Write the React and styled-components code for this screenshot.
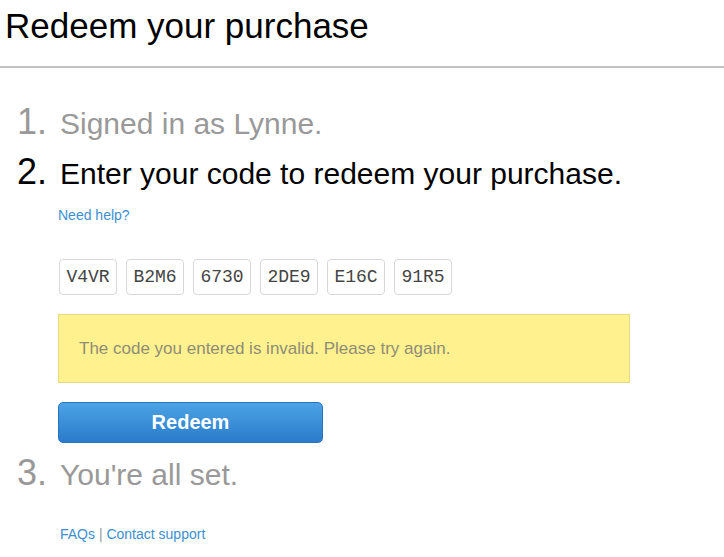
import React from "react";
import styled, { createGlobalStyle } from "styled-components";

const Global = createGlobalStyle`
  html, body { margin: 0; padding: 0; background: #fff; }
  body { font-family: "Liberation Sans", Arial, sans-serif; }
`;

const Header = styled.header`
  height: 68px;
  box-sizing: border-box;
  padding: 6px 0 0 5px;
  border-bottom: 2px solid #c2c2c2;
`;

const Title = styled.h1`
  margin: 0;
  font-size: 35px;
  font-weight: normal;
  line-height: 40px;
  color: #000;
`;

const Main = styled.main`
  padding: 30px 0 0 17px;
`;

const Step = styled.div`
  display: flex;
  align-items: baseline;
  line-height: 48px;
  color: ${(p) => (p.$active ? "#000" : "#999")};
`;

const Num = styled.span`
  width: 43px;
  font-size: 36px;
  flex: none;
`;

const StepText = styled.span`
  font-size: 30px;
`;

const Body = styled.div`
  padding-left: 41px;
  display: flex;
  flex-direction: column;
  align-items: flex-start;
`;

const Link = styled.a`
  color: #3d8fd1;
  text-decoration: none;
  font-size: 14px;
  line-height: 20px;
`;

const Help = styled(Link)`
  margin-top: 7px;
`;

const Codes = styled.div`
  display: flex;
  gap: 9px;
  margin: 34px 0 0 1px;
`;

const CodeBox = styled.div`
  width: 58px;
  height: 36px;
  box-sizing: border-box;
  border: 1px solid #d8d8d8;
  border-radius: 4px;
  display: flex;
  align-items: center;
  justify-content: center;
  font-family: "Liberation Mono", "Courier New", monospace;
  font-size: 18px;
  color: #444;
`;

const Alert = styled.div`
  margin-top: 19px;
  width: 572px;
  height: 69px;
  box-sizing: border-box;
  background: #fff28e;
  border: 1px solid #e3d985;
  display: flex;
  align-items: center;
  padding-left: 20px;
  font-size: 17px;
  color: #8f8c78;
`;

const Button = styled.button`
  margin-top: 19px;
  width: 265px;
  height: 41px;
  border: 1px solid #2b74bd;
  border-radius: 5px;
  background: linear-gradient(#4ca3e4, #2a7bcb);
  color: #fff;
  font-family: "Liberation Sans", Arial, sans-serif;
  font-weight: bold;
  font-size: 20px;
  cursor: pointer;
`;

const Step3 = styled(Step)`
  margin-top: 6px;
`;

const Footer = styled.div`
  padding-left: 43px;
  margin-top: 25px;
  font-size: 14px;
  line-height: 20px;
  color: #999;
`;

const codes = ["V4VR", "B2M6", "6730", "2DE9", "E16C", "91R5"];

export default function App() {
  return (
    <>
      <Global />
      <Header>
        <Title>Redeem your purchase</Title>
      </Header>
      <Main>
        <Step>
          <Num>1.</Num>
          <StepText>Signed in as Lynne.</StepText>
        </Step>
        <Step $active>
          <Num>2.</Num>
          <StepText>Enter your code to redeem your purchase.</StepText>
        </Step>
        <Body>
          <Help href="#">Need help?</Help>
          <Codes>
            {codes.map((c) => (
              <CodeBox key={c}>{c}</CodeBox>
            ))}
          </Codes>
          <Alert>The code you entered is invalid. Please try again.</Alert>
          <Button>Redeem</Button>
        </Body>
        <Step3>
          <Num>3.</Num>
          <StepText>You're all set.</StepText>
        </Step3>
        <Footer>
          <Link href="#">FAQs</Link> | <Link href="#">Contact support</Link>
        </Footer>
      </Main>
    </>
  );
}
